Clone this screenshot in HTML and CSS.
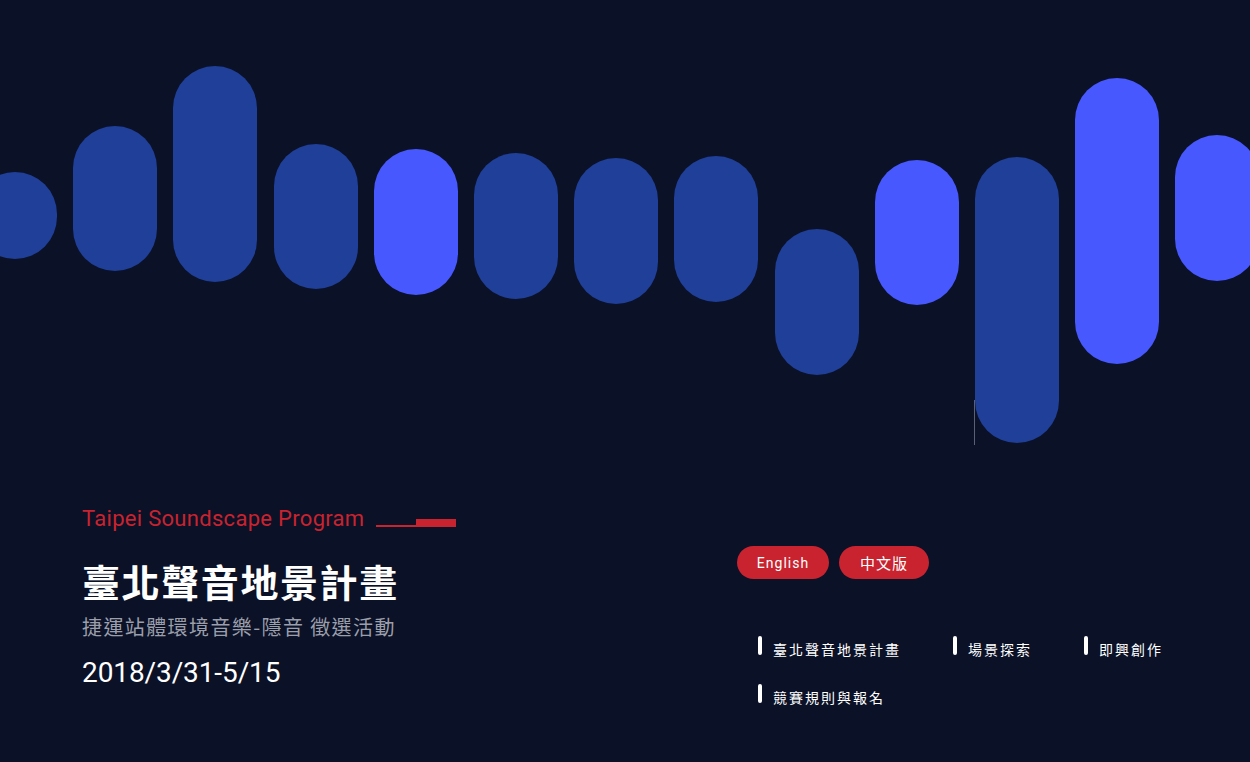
FILE: index.html
```html
<!DOCTYPE html>
<html lang="zh-Hant">
<head>
<meta charset="utf-8">
<title>臺北聲音地景計畫</title>
<link rel="stylesheet" href="styles.css">
</head>
<body>
<div class="page">
  <div class="wave">
    <div class="bar dark" style="margin-top:172px;height:87px"></div>
    <div class="bar dark" style="margin-top:126px;height:145px"></div>
    <div class="bar dark" style="margin-top:66px;height:216px"></div>
    <div class="bar dark" style="margin-top:144px;height:145px"></div>
    <div class="bar light" style="margin-top:149px;height:146px"></div>
    <div class="bar dark" style="margin-top:153px;height:146px"></div>
    <div class="bar dark" style="margin-top:158px;height:146px"></div>
    <div class="bar dark" style="margin-top:156px;height:146px"></div>
    <div class="bar dark" style="margin-top:229px;height:146px"></div>
    <div class="bar light" style="margin-top:160px;height:145px"></div>
    <div class="bar dark marker" style="margin-top:157px;height:286px"></div>
    <div class="bar light" style="margin-top:78px;height:286px"></div>
    <div class="bar light" style="margin-top:135px;height:146px"></div>
  </div>
  <div class="info">
    <div class="intro">
      <div class="tagline">
        <span class="tagline-text">Taipei Soundscape Program</span>
        <span class="rule"><i class="rule-thin"></i><i class="rule-thick"></i></span>
      </div>
      <h1 class="title">臺北聲音地景計畫</h1>
      <p class="subtitle">捷運站體環境音樂-隱音 徵選活動</p>
      <p class="date">2018/3/31-5/15</p>
    </div>
    <div class="side">
      <div class="langs">
        <a class="pill pill-en" href="#">English</a>
        <a class="pill pill-zh" href="#">中文版</a>
      </div>
      <ul class="nav">
        <li class="nav-item"><span class="nav-mark"></span><span class="nav-label">臺北聲音地景計畫</span></li>
        <li class="nav-item"><span class="nav-mark"></span><span class="nav-label">場景探索</span></li>
        <li class="nav-item"><span class="nav-mark"></span><span class="nav-label">即興創作</span></li>
        <li class="nav-item"><span class="nav-mark"></span><span class="nav-label">競賽規則與報名</span></li>
      </ul>
    </div>
  </div>
</div>
</body>
</html>
```

FILE: styles.css
```css
* { box-sizing: border-box; }
html, body {
  margin: 0;
  padding: 0;
  background: #0b1126;
  overflow: hidden;
}
body {
  font-family: Roboto, "Noto Sans CJK TC", sans-serif;
  color: #ffffff;
}
.page {
  width: 1250px;
  height: 762px;
  display: flex;
  flex-direction: column;
  overflow: hidden;
  background: #0b1126;
}
.wave {
  height: 450px;
  display: flex;
  align-items: flex-start;
  gap: 16.2px;
  margin-left: -27px;
  flex: none;
}
.bar {
  flex: none;
  width: 84px;
  border-radius: 42px;
}
.bar.dark { background: #1f3f98; }
.bar.light { background: #4658fe; }
.marker { position: relative; }
.marker::before {
  content: "";
  position: absolute;
  left: -1px;
  top: 243px;
  width: 1px;
  height: 45px;
  background: #5a6075;
}
.info {
  flex: 1;
  display: flex;
}
.intro {
  flex: none;
  width: 737px;
  padding-left: 82px;
  padding-top: 57px;
}
.tagline {
  display: flex;
  align-items: flex-end;
  gap: 12px;
  height: 24px;
}
.tagline-text {
  font-family: Roboto, sans-serif;
  font-size: 22px;
  line-height: 24px;
  letter-spacing: 0.3px;
  color: #c8232f;
}
.rule {
  display: flex;
  align-items: flex-end;
  margin-bottom: 4px;
}
.rule-thin {
  display: block;
  width: 40px;
  height: 2px;
  background: #c8232f;
}
.rule-thick {
  display: block;
  width: 40px;
  height: 8px;
  background: #c8232f;
}
.title {
  margin: 27px 0 0;
  font-family: "Noto Sans CJK TC", sans-serif;
  font-weight: 700;
  font-size: 38px;
  line-height: 46px;
  letter-spacing: 1.6px;
  color: #ffffff;
}
.subtitle {
  margin: 9px 0 0;
  font-family: "Noto Sans CJK TC", sans-serif;
  font-size: 20px;
  line-height: 28px;
  letter-spacing: 1.4px;
  color: #9b9fab;
}
.date {
  margin: 15px 0 0;
  font-family: Roboto, sans-serif;
  font-size: 28px;
  line-height: 34px;
  letter-spacing: -0.1px;
  color: #ffffff;
}
.side {
  flex: none;
  padding-top: 96px;
}
.langs {
  display: flex;
  gap: 10px;
}
.pill {
  display: flex;
  align-items: center;
  justify-content: center;
  height: 33px;
  border-radius: 17px;
  background: #c8232f;
  color: #ffffff;
  text-decoration: none;
  font-size: 14px;
  letter-spacing: 1px;
}
.pill-en { width: 92px; font-family: Roboto, sans-serif; }
.pill-zh { width: 90px; font-family: "Noto Sans CJK TC", sans-serif; font-size: 15px; }
.nav {
  list-style: none;
  margin: 57px 0 0;
  padding: 0 0 0 21px;
  width: 470px;
  display: flex;
  flex-wrap: wrap;
  column-gap: 52px;
  row-gap: 29px;
}
.nav-item {
  display: flex;
  align-items: center;
  gap: 11px;
  height: 19px;
}
.nav-mark {
  width: 4px;
  height: 19px;
  border-radius: 2px;
  background: #ffffff;
}
.nav-label {
  font-family: "Noto Sans CJK TC", sans-serif;
  font-size: 14px;
  line-height: 19px;
  letter-spacing: 2px;
  color: #ffffff;
  padding-top: 8px;
}
```
